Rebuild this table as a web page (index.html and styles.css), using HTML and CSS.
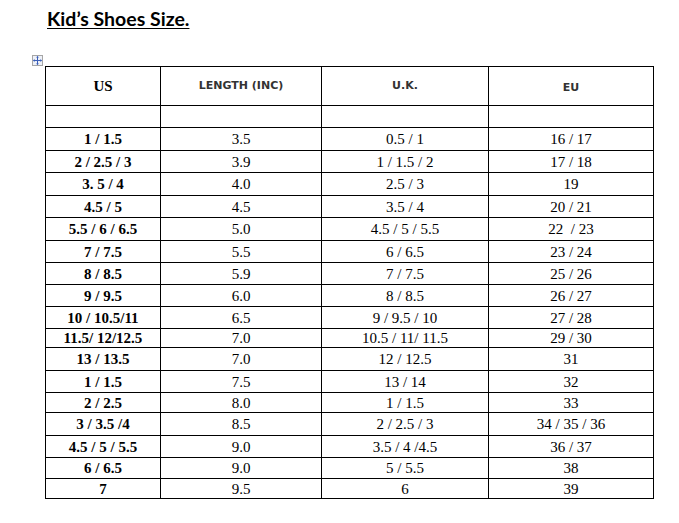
FILE: index.html
```html
<!DOCTYPE html>
<html lang="en">
<head>
<meta charset="utf-8">
<title>Kid's Shoes Size</title>
<link rel="stylesheet" href="styles.css">
</head>
<body>
<h1 class="title">Kid’s Shoes Size.</h1>
<div class="table-wrap">
  <span class="move-handle" aria-hidden="true">
    <svg width="9" height="9" viewBox="0 0 9 9">
      <path d="M4.5 0.5V8.5M0.5 4.5H8.5" stroke="#3b5fb8" stroke-width="1" fill="none"/>
      <path d="M4.5 0L3 1.6H6Z M4.5 9L3 7.4H6Z M0 4.5L1.6 3V6Z M9 4.5L7.4 3V6Z" fill="#3b5fb8"/>
    </svg>
  </span>
  <table class="sizes">
    <colgroup>
      <col class="c1"><col class="c2"><col class="c3"><col class="c4">
    </colgroup>
    <thead>
      <tr class="head">
        <th class="serif-h">US</th>
        <th class="sans-h">LENGTH (INC)</th>
        <th class="sans-h">U.K.</th>
        <th class="sans-h"><span class="eu">EU</span></th>
      </tr>
    </thead>
    <tbody>
      <tr class="r22"><td></td><td></td><td></td><td></td></tr>
      <tr class="r23"><td class="us">1 / 1.5</td><td>3.5</td><td>0.5 / 1</td><td>16 / 17</td></tr>
      <tr class="r22"><td class="us">2 / 2.5 / 3</td><td>3.9</td><td>1 / 1.5 / 2</td><td>17 / 18</td></tr>
      <tr class="r23"><td class="us">3. 5 / 4</td><td>4.0</td><td>2.5 / 3</td><td>19</td></tr>
      <tr class="r22"><td class="us">4.5 / 5</td><td>4.5</td><td>3.5 / 4</td><td>20 / 21</td></tr>
      <tr class="r23"><td class="us">5.5 / 6 / 6.5</td><td>5.0</td><td>4.5 / 5 / 5.5</td><td>22&nbsp; / 23</td></tr>
      <tr class="r22"><td class="us">7 / 7.5</td><td>5.5</td><td>6 / 6.5</td><td>23 / 24</td></tr>
      <tr class="r22"><td class="us">8 / 8.5</td><td>5.9</td><td>7 / 7.5</td><td>25 / 26</td></tr>
      <tr class="r22"><td class="us">9 / 9.5</td><td>6.0</td><td>8 / 8.5</td><td>26 / 27</td></tr>
      <tr class="r22"><td class="us">10 / 10.5/11</td><td>6.5</td><td>9 / 9.5 / 10</td><td>27 / 28</td></tr>
      <tr class="r19"><td class="us">11.5/ 12/12.5</td><td>7.0</td><td>10.5 / 11/ 11.5</td><td>29 / 30</td></tr>
      <tr class="r23"><td class="us">13 / 13.5</td><td>7.0</td><td>12 / 12.5</td><td>31</td></tr>
      <tr class="r22"><td class="us">1 / 1.5</td><td>7.5</td><td>13 / 14</td><td>32</td></tr>
      <tr class="r20"><td class="us">2 / 2.5</td><td>8.0</td><td>1 / 1.5</td><td>33</td></tr>
      <tr class="r23"><td class="us">3 / 3.5 /4</td><td>8.5</td><td>2 / 2.5 / 3</td><td>34 / 35 / 36</td></tr>
      <tr class="r22"><td class="us">4.5 / 5 / 5.5</td><td>9.0</td><td>3.5 / 4 /4.5</td><td>36 / 37</td></tr>
      <tr class="r21"><td class="us">6 / 6.5</td><td>9.0</td><td>5 / 5.5</td><td>38</td></tr>
      <tr class="r20"><td class="us">7</td><td>9.5</td><td>6</td><td>39</td></tr>
    </tbody>
  </table>
  <span class="resize-handle" aria-hidden="true"></span>
</div>
</body>
</html>
```
FILE: styles.css
```css
html, body {
  margin: 0;
  padding: 0;
  background: #ffffff;
}

body {
  padding: 8px 0 0 45px;
  font-family: "Liberation Serif", "Times New Roman", serif;
  color: #000;
}

.title {
  margin: 0 0 0 2px;
  font-family: Lato, "Open Sans", sans-serif;
  font-weight: 700;
  font-size: 19.5px;
  line-height: 22px;
  text-decoration: underline;
  text-decoration-thickness: 1px;
  text-underline-offset: 2px;
  color: #000;
}

.table-wrap {
  position: relative;
  margin-top: 36px;
  width: 608px;
}

.move-handle {
  position: absolute;
  left: -13px;
  top: -11px;
  width: 11px;
  height: 11px;
  box-sizing: border-box;
  border: 1px solid #a6a6a6;
  background: #eef1f8;
  display: flex;
  align-items: center;
  justify-content: center;
}

.resize-handle {
  position: absolute;
  right: -6px;
  bottom: -8px;
  width: 5px;
  height: 5px;
  border: 1px solid #8c8c8c;
  background: #fff;
}

.sizes {
  border-collapse: collapse;
  table-layout: fixed;
  width: 608px;
}

.c1 { width: 115px; }
.c2 { width: 161px; }
.c3 { width: 167px; }
.c4 { width: 165px; }

.sizes th,
.sizes td {
  border: 1px solid #000;
  padding: 0;
  text-align: center;
  vertical-align: middle;
  font-size: 15px;
  line-height: 16px;
}

.head th { height: 38px; }

.serif-h {
  font-family: "Liberation Serif", "Times New Roman", serif;
  font-weight: 700;
  font-size: 16px;
}

.sizes .sans-h {
  font-family: "DejaVu Sans", Verdana, sans-serif;
  font-weight: 700;
  font-size: 11px;
  color: #333;
}

.eu {
  position: relative;
  top: 2px;
}

.us { font-weight: 700; }

.r19 td { height: 18px; }
.r20 td { height: 19px; }
.r21 td { height: 20px; }
.r22 td { height: 21px; }
.r23 td { height: 22px; }
```
